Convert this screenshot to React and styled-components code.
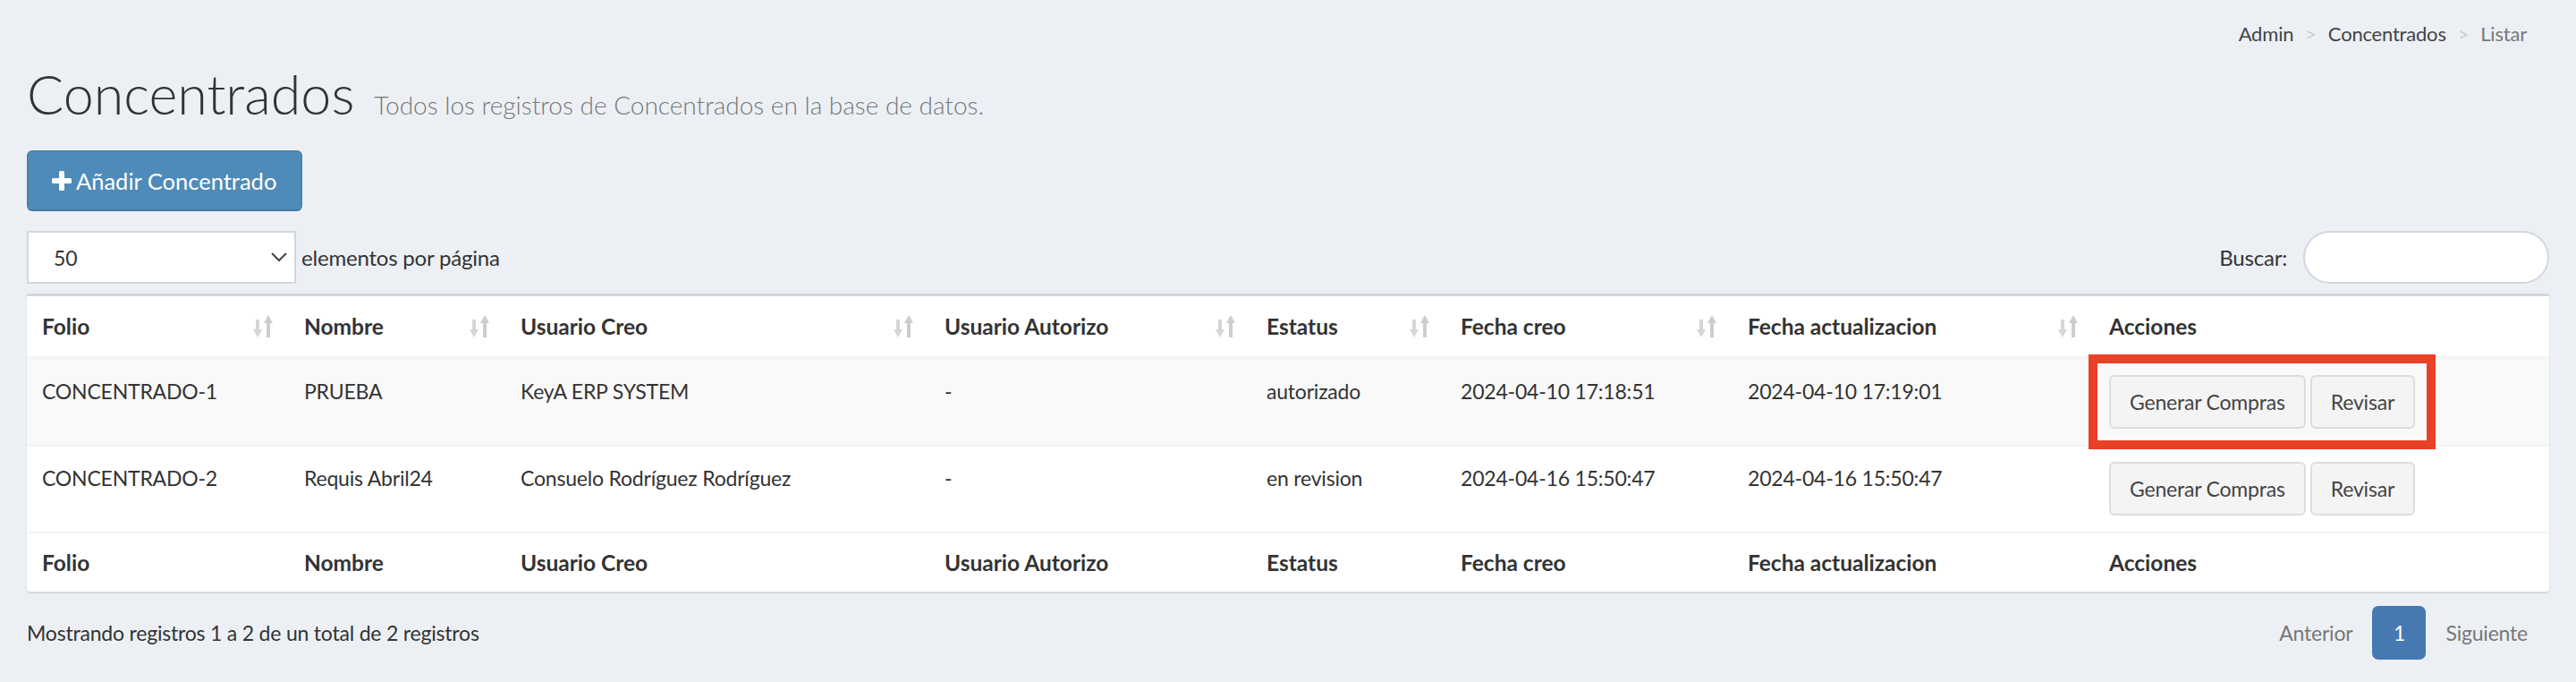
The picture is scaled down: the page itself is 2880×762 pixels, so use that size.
import React from "react";
import styled, { createGlobalStyle } from "styled-components";

const GlobalStyle = createGlobalStyle`
  html, body {
    margin: 0;
    padding: 0;
    background: #ecf0f5;
  }
  body {
    font-family: Lato, "Open Sans", sans-serif;
    color: #333;
  }
  * { box-sizing: border-box; }
`;

const Page = styled.div`
  width: 2880px;
  height: 762px;
  padding: 0 30px;
  background: #ecf0f5;
  overflow: hidden;
  font-size: 23px;
  letter-spacing: -0.2px;
`;

const Breadcrumb = styled.ol`
  display: flex;
  justify-content: flex-end;
  gap: 13px;
  margin: 0;
  padding: 21px 25px 0 0;
  list-style: none;
  font-size: 22px;
  line-height: 34px;
`;

const Crumb = styled.li`
  color: ${(p) => (p.$active ? "#777" : "#444")};
`;

const Sep = styled.li`
  color: #ccc;
`;

const Title = styled.h1`
  display: flex;
  align-items: baseline;
  gap: 22px;
  height: 73px;
  margin: 13px 0 0;
  font-size: 61px;
  font-weight: 300;
  line-height: 73px;
  letter-spacing: 0;
  color: #333;
`;

const Subtitle = styled.small`
  font-size: 28px;
  font-weight: 300;
  line-height: 34px;
  color: #777;
`;

const AddButton = styled.button`
  display: flex;
  align-items: center;
  gap: 5px;
  margin-top: 27px;
  height: 68px;
  padding: 0 27px 0 26px;
  background: #4f8bb8;
  border: 2px solid #4a84b0;
  border-bottom-color: #44789f;
  border-radius: 6px;
  color: #fff;
  font-family: inherit;
  font-size: 25.5px;
  letter-spacing: 0;
`;

const Toolbar = styled.div`
  display: flex;
  justify-content: space-between;
  align-items: center;
  margin-top: 22px;
`;

const Length = styled.label`
  display: flex;
  align-items: center;
  gap: 6px;
  font-size: 24px;
`;

const FakeSelect = styled.div`
  display: flex;
  align-items: center;
  justify-content: space-between;
  width: 301px;
  height: 59px;
  padding: 0 8px 0 28px;
  background: #fff;
  border: 2px solid #d2d6de;
  font-size: 23px;
  color: #333;
`;

const Search = styled.label`
  display: flex;
  align-items: center;
  gap: 18px;
  font-size: 24px;
`;

const SearchInput = styled.input`
  width: 275px;
  height: 59px;
  border: 2px solid #d2d6de;
  border-radius: 30px;
  background: #fff;
  outline: none;
`;

const Box = styled.div`
  margin-top: 11px;
  background: #fff;
  border-top: 3px solid #d2d6de;
  border-radius: 3px;
  box-shadow: 0 2px 2px rgba(0, 0, 0, 0.1);
`;

const Table = styled.table`
  width: 100%;
  border-collapse: collapse;
  table-layout: fixed;
`;

const Th = styled.th`
  padding: ${(p) => (p.$foot ? "14px 17px" : "15px 17px")};
  text-align: left;
  font-size: 24.5px;
  font-weight: 700;
  line-height: 37px;
  letter-spacing: 0;
  color: #333;
  border-bottom: ${(p) => (p.$foot ? "none" : "4px solid #f4f4f4")};
  border-top: ${(p) => (p.$foot ? "2px solid #f4f4f4" : "none")};
`;

const HeadInner = styled.div`
  display: flex;
  align-items: center;
  justify-content: space-between;
`;

const Row = styled.tr`
  background: ${(p) => (p.$striped ? "#f9f9f9" : "#fff")};
`;

const Td = styled.td`
  padding: 17px 17px 18px;
  vertical-align: top;
  line-height: 37px;
  color: #333;
  border-top: 2px solid #f4f4f4;
  white-space: nowrap;
`;

const ButtonGroup = styled.div`
  display: inline-flex;
  gap: 5px;
  outline: ${(p) => (p.$highlight ? "10px solid #e94128" : "none")};
  outline-offset: 13px;
  position: relative;
  z-index: 1;
`;

const ActionButton = styled.button`
  height: 60px;
  padding: 0 21px;
  background: #f4f4f4;
  border: 2px solid #ddd;
  border-radius: 6px;
  color: #444;
  font-family: inherit;
  font-size: 23px;
  letter-spacing: -0.2px;
`;

const Footer = styled.div`
  display: flex;
  justify-content: space-between;
  align-items: center;
  margin-top: 16px;
`;

const Info = styled.div`
  color: #333;
`;

const Pager = styled.div`
  display: flex;
  align-items: center;
  gap: 22px;
  padding-right: 24px;
`;

const PageLink = styled.span`
  color: #777;
`;

const PageCurrent = styled.span`
  display: flex;
  align-items: center;
  justify-content: center;
  width: 60px;
  height: 60px;
  border-radius: 7px;
  background: #4679b2;
  color: #fff;
`;

const columns = [
  { label: "Folio", width: 293 },
  { label: "Nombre", width: 242 },
  { label: "Usuario Creo", width: 474 },
  { label: "Usuario Autorizo", width: 360 },
  { label: "Estatus", width: 217 },
  { label: "Fecha creo", width: 321 },
  { label: "Fecha actualizacion", width: 404 },
  { label: "Acciones", width: 509, noSort: true },
];

const rows = [
  [
    "CONCENTRADO-1",
    "PRUEBA",
    "KeyA ERP SYSTEM",
    "-",
    "autorizado",
    "2024-04-10 17:18:51",
    "2024-04-10 17:19:01",
  ],
  [
    "CONCENTRADO-2",
    "Requis Abril24",
    "Consuelo Rodríguez Rodríguez",
    "-",
    "en revision",
    "2024-04-16 15:50:47",
    "2024-04-16 15:50:47",
  ],
];

function SortIcon() {
  return (
    <svg width="23" height="25" viewBox="0 0 23 25">
      <rect x="3" y="5" width="4" height="13" fill="#d6d6d6" />
      <polygon points="0,16 10,16 5,25" fill="#d6d6d6" />
      <polygon points="12,9 22,9 17,0" fill="#cdcdcd" />
      <rect x="15" y="8" width="4" height="17" fill="#cdcdcd" />
    </svg>
  );
}

function PlusIcon() {
  return (
    <svg width="22" height="22" viewBox="0 0 22 22">
      <rect x="8" y="0" width="6" height="22" rx="1.5" fill="#fff" />
      <rect x="0" y="8" width="22" height="6" rx="1.5" fill="#fff" />
    </svg>
  );
}

function Chevron() {
  return (
    <svg width="18" height="11" viewBox="0 0 18 11">
      <polyline points="1,1 9,9 17,1" fill="none" stroke="#444" strokeWidth="2" />
    </svg>
  );
}

export default function App() {
  return (
    <Page>
      <GlobalStyle />
      <Breadcrumb>
        <Crumb>Admin</Crumb>
        <Sep>&gt;</Sep>
        <Crumb>Concentrados</Crumb>
        <Sep>&gt;</Sep>
        <Crumb $active>Listar</Crumb>
      </Breadcrumb>
      <Title>
        Concentrados
        <Subtitle>Todos los registros de Concentrados en la base de datos.</Subtitle>
      </Title>
      <AddButton>
        <PlusIcon />
        Añadir Concentrado
      </AddButton>

      <Toolbar>
        <Length>
          <FakeSelect>
            50
            <Chevron />
          </FakeSelect>
          elementos por página
        </Length>
        <Search>
          Buscar:
          <SearchInput type="search" />
        </Search>
      </Toolbar>

      <Box>
        <Table>
          <colgroup>
            {columns.map((c) => (
              <col key={c.label} style={{ width: c.width }} />
            ))}
          </colgroup>
          <thead>
            <tr>
              {columns.map((c) => (
                <Th key={c.label}>
                  <HeadInner>
                    {c.label}
                    {!c.noSort && <SortIcon />}
                  </HeadInner>
                </Th>
              ))}
            </tr>
          </thead>
          <tbody>
            {rows.map((r, i) => (
              <Row key={r[0]} $striped={i % 2 === 0}>
                {r.map((cell, j) => (
                  <Td key={j}>{cell}</Td>
                ))}
                <Td>
                  <ButtonGroup $highlight={i === 0}>
                    <ActionButton>Generar Compras</ActionButton>
                    <ActionButton>Revisar</ActionButton>
                  </ButtonGroup>
                </Td>
              </Row>
            ))}
          </tbody>
          <tfoot>
            <tr>
              {columns.map((c) => (
                <Th key={c.label} $foot>
                  {c.label}
                </Th>
              ))}
            </tr>
          </tfoot>
        </Table>
      </Box>

      <Footer>
        <Info>Mostrando registros 1 a 2 de un total de 2 registros</Info>
        <Pager>
          <PageLink>Anterior</PageLink>
          <PageCurrent>1</PageCurrent>
          <PageLink>Siguiente</PageLink>
        </Pager>
      </Footer>
    </Page>
  );
}
